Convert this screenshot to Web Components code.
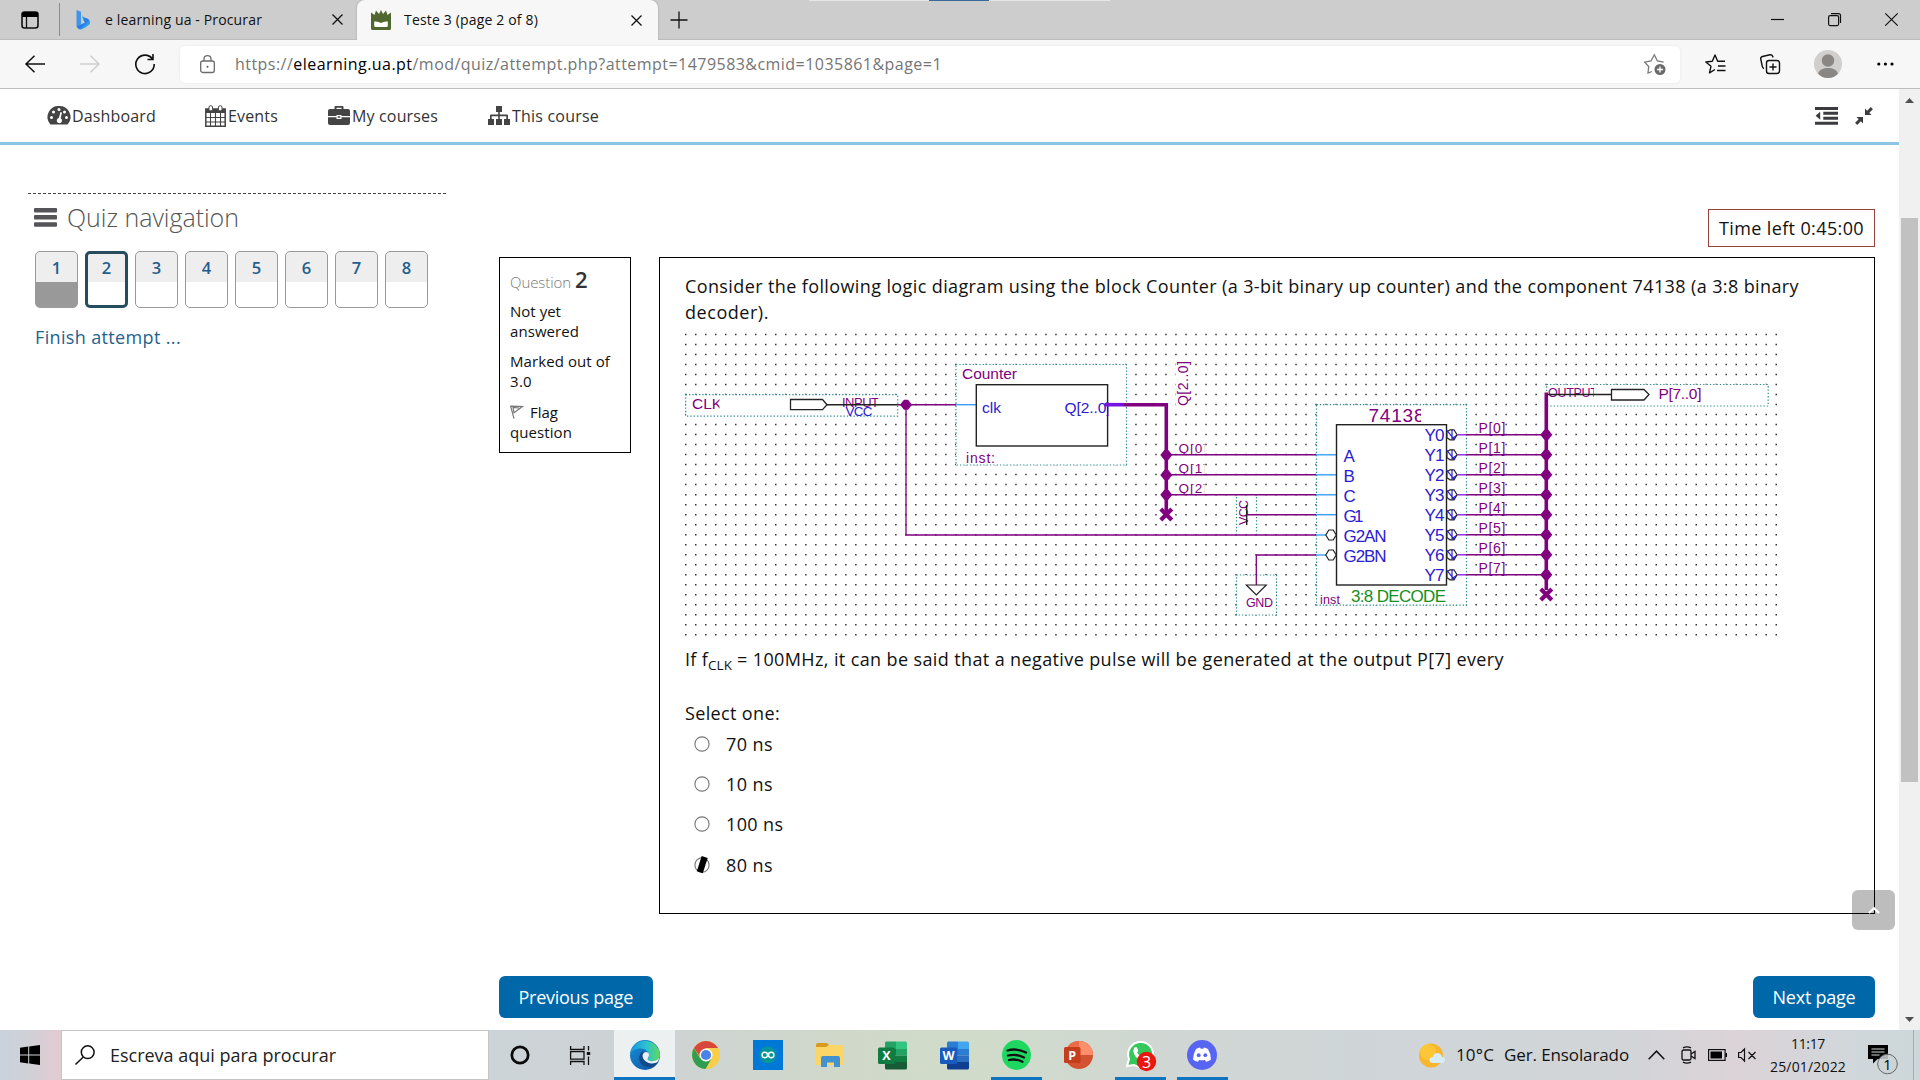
<!DOCTYPE html>
<html lang="en"><head><meta charset="utf-8"><title>Teste 3 (page 2 of 8)</title>
<style>
html,body{margin:0;width:1920px;height:1080px;overflow:hidden;background:#fff}
body{display:flex;flex-direction:column;font-family:"Open Sans","Noto Sans",sans-serif;color:#111}
body>*{box-sizing:border-box}
</style></head><body>
<edge-tabs></edge-tabs>
<edge-toolbar></edge-toolbar>
<page-view></page-view>
<task-bar></task-bar>
<script>
const define=(name,html,init)=>customElements.define(name,class extends HTMLElement{
  connectedCallback(){
    if(this.shadowRoot)return;
    const t=document.createElement('template');
    t.innerHTML='<style>*{box-sizing:border-box}svg{display:block;overflow:visible;flex:none}</style>'+(typeof html==='function'?html(this):html);
    this.attachShadow({mode:'open'}).append(t.content.cloneNode(true));
    if(init)init(this);
  }
});

/* One line of text tracked to a given measure */
define('fit-text','<style>:host{display:block;white-space:nowrap;flex:none}span{display:inline-block}</style><span><slot></slot></span>',el=>{
  const w=+el.getAttribute('w'),s=el.shadowRoot.querySelector('span');
  if(!w)return;
  el.style.width=w+'px';
  const n=el.textContent.length;
  s.style.letterSpacing=((w-s.getBoundingClientRect().width)/n)+'px';
});

define('x-mark',`<style>:host{display:block}</style><svg width="11" height="11" viewBox="0 0 11 11" stroke="#111" stroke-width="1.3"><path d="M.5.5 10.5 10.5M10.5.5.5 10.5"/></svg>`);

define('edge-tabs',`<style>
:host{display:flex;height:40px;background:#cdcdcd;position:relative;align-items:center;font-size:14px;line-height:20px;flex:none;border-bottom:1px solid #bcbcbc}
.left{width:357px;display:flex;align-items:center;padding-left:21px;height:40px}
.sep{width:1px;height:33px;background:#8b8b8b;margin:0 16px 0 20px}
.active{width:301px;height:40px;background:#f7f7f7;border-radius:8px 8px 0 0;display:flex;align-items:center;padding-left:14px;box-shadow:0 0 2px #999;clip-path:inset(-3px -3px 0 -3px);margin-bottom:-1px}
.win{margin-left:auto;display:flex;gap:44px;padding-right:22px;align-items:center}
.pill{position:absolute;left:809px;top:0;width:301px;height:1px;background:linear-gradient(90deg,#e6e6e6 120px,#38689c 120px 180px,#e6e6e6 180px)}
</style>
<div class="left">
<svg width="18" height="18" viewBox="0 0 18 18"><rect x="1" y="1" width="16" height="16" rx="2.5" fill="none" stroke="#111" stroke-width="1.6"/><path d="M1 3q0-2 2-2h12q2 0 2 2v3H1z"/><path d="M5.5 6v11" stroke="#111" stroke-width="1.3"/></svg>
<div class="sep"></div>
<svg width="15" height="20" viewBox="0 0 15 20"><defs><linearGradient id="b" x1="0" y1="0" x2="1" y2="1"><stop offset="0" stop-color="#39b7f3"/><stop offset=".5" stop-color="#2578e8"/><stop offset="1" stop-color="#43d0e8"/></linearGradient></defs><path d="M.5 0 5 1.8V14L1.5 17.5.5 16.5z" fill="#4095e8"/><path d="M6 6.2 12.3 9Q14.5 10.5 14 13.5 13.5 15.5 5 19.5 1.5 19.5 1 16.3L9 12.5 7.6 10.5z" fill="url(#b)"/></svg>
<fit-text w="157" style="margin-left:14px">e learning ua - Procurar</fit-text>
<x-mark style="margin-left:70px"></x-mark>
</div>
<div class="active">
<svg width="20" height="20" viewBox="0 0 20 20"><path d="M0 2.500 3.500 5 5 .5 8 4 10 0 12 4 15 .5 16.500 5 20 2.500V18.500q0 1.500-1.500 1.500h-17Q0 20 0 18.500z" fill="#50682f"/><path d="M3.200 11.500q3.800-.5 6.800 1.500 3-2 6.800-1.500V16q-.3 1-1.500 1H4.700q-1.200 0-1.500-1z" fill="#fff"/></svg>
<fit-text w="134" style="margin-left:13px">Teste 3 (page 2 of 8)</fit-text>
<x-mark style="margin-left:93px"></x-mark></div>
<svg style="margin-left:12px" width="18" height="18" viewBox="0 0 18 18"><path d="M9 .5v17M.5 9h17" stroke="#111" stroke-width="1.3"/></svg>
<div class="win"><svg width="13" height="13"><path d="M0 6.500h13" stroke="#111" stroke-width="1.200"/></svg>
<svg width="13" height="13" fill="none" stroke="#111" stroke-width="1.200"><rect x=".6" y="2.600" width="10" height="10" rx="1.500"/><path d="M3 .6h7.500Q12.500.6 12.500 2.600V10"/></svg>
<svg width="13" height="13"><path d="M.3.3 12.700 12.700M12.700.3.3 12.700" stroke="#111" stroke-width="1.200"/></svg></div>
<div class="pill"></div>`);

define('edge-toolbar',`<style>
:host{display:flex;height:49px;background:#f7f7f7;border-bottom:1px solid #bdbdbd;align-items:center;flex:none;padding-left:25px}
.url{margin-left:25px;width:1500px;height:37px;background:#fff;border-radius:5px;display:flex;align-items:center;padding:0 14px 0 20px;box-shadow:0 0 3px #e6e6e6}
fit-text{margin-left:20px;color:#757575;font-size:16px;line-height:24px;margin-right:auto}b{font-weight:400;color:#000}
</style>
<svg width="20" height="18" viewBox="0 0 20 18" fill="none" stroke="#111" stroke-width="1.500"><path d="M20 9H1M9.500.700 1 9l8.500 8.300"/></svg>
<svg style="margin-left:35px" width="20" height="18" viewBox="0 0 20 18" fill="none" stroke="#cfcfcf" stroke-width="1.500"><path d="M0 9h19M10.500.7 19 9l-8.500 8.300"/></svg>
<svg style="margin-left:35px" width="20" height="20" viewBox="0 0 20 20" fill="none" stroke="#111" stroke-width="1.600"><path d="M17.500 5A9.200 9.200 0 1 0 19.200 10M18 0v5.500h-5.500"/></svg>
<div class="url"><svg width="15" height="18" viewBox="0 0 15 18" fill="none" stroke="#6b6b6b" stroke-width="1.300"><rect x=".7" y="6" width="13.600" height="11.500" rx="2"/><path d="M4 6V4Q4 .7 7.500.7T11 4v2"/><circle cx="7.500" cy="11.800" r="1" fill="#555" stroke="none"/></svg>
<fit-text w="707">https://<b>elearning.ua.pt</b>/mod/quiz/attempt.php?attempt=1479583&amp;cmid=1035861&amp;page=1</fit-text>
<svg width="22" height="21" viewBox="0 0 22 21"><path d="M8 17.500 4 19l.7-6.500L.7 8.200 7 7l3.300-6.200L13.400 7l6.200 1.200" fill="none" stroke="#777" stroke-width="1.300"/><circle cx="16" cy="15.500" r="5.500" fill="#6a6a6a"/><path d="M16 12.500v6M13 15.500h6" stroke="#fff" stroke-width="1.300"/></svg></div>
<svg style="margin-left:25px" width="21" height="20" viewBox="0 0 21 20" fill="none" stroke="#111" stroke-width="1.400"><path d="M10 15.500 4.500 18.800 6 12.200.8 8l6.500-.7L10 1l2.700 6.200H20M13 12h7.500M12 16.500h8.500" stroke-linejoin="round"/></svg>
<svg style="margin-left:34px" width="20" height="20" viewBox="0 0 20 20" fill="none" stroke="#111" stroke-width="1.400"><rect x="6.500" y="6.500" width="13" height="13" rx="2.500"/><path d="M13 9.500v7M9.500 13h7M4 14.500Q2.500 14 2.200 12L.7 5Q.5 3 2.500 2.500L10 .7Q12 .5 12.800 2.500L13 3.500"/></svg>
<svg style="margin-left:34px" width="28" height="28" viewBox="0 0 28 28"><circle cx="14" cy="14" r="14" fill="#d1cfcd"/><circle cx="14" cy="10.500" r="6.200" fill="#8a8684"/><path d="M4 23.500Q6 18 14 18t10 5.500Q20 28 14 28T4 23.500" fill="#8a8684"/></svg>
<svg style="margin-left:35px" width="17" height="4"><circle cx="1.800" cy="2" r="1.600"/><circle cx="8.400" cy="2" r="1.600"/><circle cx="15" cy="2" r="1.600"/></svg>`);

define('page-view',`<style>
:host{display:flex;height:941px;flex:none;background:#fff}
.page{width:1899px;display:flex;flex-direction:column}
.cols{display:flex;height:885px}
.main{width:1376px;margin-left:52px;display:flex;flex-direction:column}
.timer{align-self:flex-end;margin-top:64px;width:167px;height:38px;border:1px solid #99413c;font-size:18px;line-height:36px;padding-left:10px}
.q{display:flex;gap:28px;margin-top:10px;height:657px}
.btns{display:flex;justify-content:space-between;margin-top:62px}
.btns div{height:42px;border-radius:6px;background:#0067a8;color:#fff;font-size:18px;line-height:42px;padding:0 19.500px}
</style>
<div class="page"><site-nav></site-nav><div class="cols"><quiz-nav></quiz-nav>
<div class="main"><div class="timer"><fit-text w="145">Time left 0:45:00</fit-text></div>
<div class="q"><question-info></question-info><question-body></question-body></div>
<div class="btns"><div><fit-text w="114.500">Previous page</fit-text></div><div><fit-text w="83">Next page</fit-text></div></div></div>
</div></div><page-scroll></page-scroll>`);

define('page-scroll',`<style>:host{display:flex;flex-direction:column;width:21px;background:#f0f0f0;align-items:center;padding-top:9px}i{width:17px;height:564px;background:#c1c1c1;margin:115px 0 235px}</style>
<svg width="9" height="5" fill="#505050"><path d="M0 5 4.500 0 9 5z"/></svg><i></i><svg width="9" height="5" fill="#505050"><path d="M0 0h9L4.500 5z"/></svg>`);

define('site-nav',`<style>
:host{display:flex;height:56px;flex:none;border-bottom:3px solid #8cc5e3;padding:0 26px 0 48px;font-size:16px;line-height:24px;color:#333;align-items:center}
div{display:flex;align-items:center;gap:2px}.r{margin-left:auto;gap:17px}
</style>
<div style="width:157px"><svg width="22" height="19" viewBox="0 0 22 19"><path d="M11 0A11 11 0 0 0 1.700 17.500Q2.200 18.500 3 18.500H19Q19.800 18.500 20.300 17.500A11 11 0 0 0 11 0z" fill="#444"/><g fill="#fff"><circle cx="3.500" cy="11.500" r="1.500"/><circle cx="5.500" cy="6" r="1.500"/><circle cx="11" cy="3.600" r="1.500"/><circle cx="16.500" cy="6" r="1.500"/><circle cx="18.500" cy="11.500" r="1.500"/><path d="M12.500 6 14 6.500 12.700 12.300A2.600 2.600 0 1 1 10.800 12z"/></g></svg><fit-text w="84">Dashboard</fit-text></div>
<div style="width:123px"><svg width="21" height="22" viewBox="0 0 21 22"><path d="M.8 4h19.400v17.200H.8z" fill="none" stroke="#444" stroke-width="1.500"/><path d="M1 4h19v4H1z" fill="#444"/><path d="M1 12.500h19M1 17h19M5.500 8v13M10.500 8v13M15.500 8v13" stroke="#444" stroke-width="1.100"/><rect x="4" y=".8" width="3.500" height="5" rx="1.300" fill="#fff" stroke="#444"/><rect x="13.500" y=".8" width="3.500" height="5" rx="1.300" fill="#fff" stroke="#444"/></svg><fit-text w="50">Events</fit-text></div>
<div style="width:160px"><svg width="22" height="19" viewBox="0 0 22 19" fill="#444"><path d="M6.500 3V1Q6.500 0 7.500 0h7Q15.500 0 15.500 1v2H20q2 0 2 2v5H13.500V9h-5v1H0V5Q0 3 2 3zM8.500 3h5V1.800h-5zM0 11.200h8.500V13h5v-1.800H22V17q0 2-2 2H2q-2 0-2-2zM9.700 10.200h2.600v1.600H9.700z" fill-rule="evenodd"/></svg><fit-text w="86">My courses</fit-text></div>
<div><svg width="22" height="19" viewBox="0 0 22 19" fill="#444"><path d="M8 0h6v6h-2.200v2.500H19q1 0 1 1V13h2v6h-6v-6h2.300v-2.700h-6.500V13H14v6H8v-6h2.200v-2.700H3.700V13H6v6H0v-6h2V9.500q0-1 1-1h7.200V6H8z"/></svg><fit-text w="87">This course</fit-text></div>
<div class="r"><svg width="23" height="18" viewBox="0 0 23 18" fill="#3c3c40"><path d="M0 0h23v3H0zM8.300 4.700H23v3H8.300zM8.300 9.700H23v3H8.300zM0 14.700h23v3H0zM5.200 4.700v8L.6 8.700z"/></svg>
<svg width="18" height="18" viewBox="0 0 18 18" fill="#3c3c40"><path d="M10 8V1.500L12.200 3.700 15.800.1 17.900 2.200 14.300 5.800 16.500 8zM8 10v6.500L5.800 14.300 2.200 17.900.1 15.800 3.700 12.200 1.500 10z"/></svg></div>`);

define('quiz-nav',el=>`<style>
:host{display:block;width:447px;padding:48px 0 0 28px}
.dash{height:0;border-top:1px dashed #444;width:418px}
h3{margin:8px 0 0 6px;display:flex;gap:10px;align-items:center;font-size:25px;font-weight:300;line-height:30px;color:#555}
.n{display:flex;gap:7px;margin:19px 0 0 7px}
.n div{width:43px;height:57px;border:1px solid #999;border-radius:5px;background:linear-gradient(#eee 30px,#fff 30px);color:#235d8c;font-weight:600;font-size:16.500px;line-height:31px;text-align:center}
.n .d{background:linear-gradient(#eee 30px,#999 30px)}.n .c{border:3px solid #264d5e;background:linear-gradient(#eee 28px,#fff 28px);line-height:27px}
a{display:block;margin:16px 0 0 7px;color:#1f628f;font-size:18px;line-height:26px}
</style><div class="dash"></div><h3><svg width="23" height="19" fill="#555559"><rect width="23" height="4.500" rx="1"/><rect y="7" width="23" height="4.500" rx="1"/><rect y="14.300" width="23" height="4.500" rx="1"/></svg><fit-text w="172">Quiz navigation</fit-text></h3>
<div class="n">${[1,2,3,4,5,6,7,8].map(n=>`<div class="${n==1?'d':n==2?'c':''}">${n}</div>`).join('')}</div><a><fit-text w="146">Finish attempt ...</fit-text></a>`);

define('question-info',`<style>
:host{display:block;width:132px;height:196px;border:1px solid #000;padding:8px 10px;font-size:15px;line-height:20px;flex:none}
.h{display:flex;align-items:baseline;gap:4px;color:#777;font-weight:300;line-height:26px;height:34.500px}b{font-size:22px;font-weight:600;color:#333}
p{margin:0 0 10px}.f{display:flex;gap:7px;align-items:center;margin-top:11px}
</style><div class="h"><fit-text w="61">Question</fit-text><b>2</b></div>
<p><fit-text w="51">Not yet</fit-text><fit-text w="69">answered</fit-text></p>
<p><fit-text w="100">Marked out of</fit-text><fit-text w="22">3.0</fit-text></p>
<p><span class="f"><svg width="13" height="14" fill="none" stroke="#777" stroke-width="1.200"><path d="M.5.7 4 13.700M1 1.200 12.500 1.600 4 7.800 3 2.500 9 3" /></svg><fit-text w="28">Flag</fit-text></span><fit-text w="62">question</fit-text></p>`);

define('question-body',el=>`<style>
:host{display:block;width:1216px;height:657px;border:1px solid #000;padding:15px 25px;font-size:18px;line-height:26px;position:relative;flex:none}
.if{display:flex;margin-top:2.500px;height:30px}.if small{font-size:13.500px;position:relative;top:6px}
.s{margin-top:24px}
.o{display:flex;align-items:center;gap:16px;height:26px;padding-left:9px;margin-top:14.200px}.o:first-of-type{margin-top:0}
.up{position:absolute;left:1192px;top:632px;width:43px;height:40px;border-radius:6px;background:rgba(0,0,0,.26);display:flex;align-items:center;justify-content:center}
</style><fit-text w="1114">Consider the following logic diagram using the block Counter (a 3-bit binary up counter) and the component 74138 (a 3:8 binary</fit-text><fit-text w="84">decoder).</fit-text>
<logic-diagram></logic-diagram>
<div class="if"><fit-text w="23">If f</fit-text><small><fit-text w="24">CLK</fit-text></small><fit-text w="767" style="margin-left:5px">= 100MHz, it can be said that a negative pulse will be generated at the output P[7] every</fit-text></div>
<fit-text class="s" w="95">Select one:</fit-text>
<section style="margin-top:5.500px">${[['70 ns',47],['10 ns',47],['100 ns',57.500],['80 ns',47]].map(([t,w],i)=>`<div class="o"><svg width="16" height="16" viewBox="0 0 16 16"><circle cx="8" cy="8" r="7.100" fill="#fff" stroke="#767676" stroke-width="1.100"/>${i==3?'<path d="M7.700-1 13.700 1 8.800 16.300 2.800 14.300z"/>':''}</svg><fit-text w="${w}">${t}</fit-text></div>`).join('')}</section>
<div class="up"><svg width="12" height="7"><path d="M1 6 6 1.300 11 6" fill="none" stroke="#fff" stroke-width="2.200"/></svg></div>`);

define('logic-diagram',()=>{
  const P='#800080',B='#2a20d0',L='#3d9df5';
  const ln=(x1,y1,x2,y2,c=P,w=1.4)=>`<path d="M${x1} ${y1}L${x2} ${y2}" stroke="${c}" stroke-width="${w}"/>`;
  const dot=(x,y)=>`<path d="M${x-6} ${y}l4-5h4l4 5-4 5h-4z" fill="${P}"/>`;
  const ex=(x,y)=>`<path d="M${x-5.5} ${y-5.5}l11 11m0-11l-11 11" stroke="${P}" stroke-width="4.200"/>`;
  const bx=(x,y,w,h)=>`<rect x="${x}" y="${y}" width="${w}" height="${h}" fill="#fff" stroke="#2b8a8a" stroke-width="1.200" stroke-dasharray="1.300 2.030"/>`;
  let id=0;
  const tx=(s,x,y,z,c,len,clip)=>{const k='c'+id++;return (clip?`<clipPath id="${k}"><rect x="${clip[0]}" y="${clip[1]}" width="${clip[2]}" height="${clip[3]}"/></clipPath>`:'')+`<text x="${x}" y="${y}" font-size="${z}" fill="${c}"${len?` textLength="${len}"`:''}${clip?` clip-path="url(#${k})"`:''}>${s}</text>`};
  let o='';
  o+=bx(685.7,394.700,212,21.500)+bx(956,364.500,170.500,100.500)+bx(1316.500,404.700,150,200.500)+bx(1236.500,575,40,40)+bx(1546.700,384.500,221.500,21.500);
  o+='<path d="M1234 496h24v38h-24z" fill="#fff"/><path d="M1236.500 497v37M1256.500 497v37" stroke="#2b8a8a" stroke-width="1.200" stroke-dasharray="1.300 2.030"/>';
  o+=tx('CLK',692,409,15.500,P,0,[690,395,29.500,20])+tx('INPUT',842,406.500,13,P,37,[840,396,38.500,11])+tx('VCC',845.500,416,13.500,B,27);
  o+='<path d="M790.500 399.500H822.500L827 404.700 822.500 409.700H790.500z" fill="#fff" stroke="#222" stroke-width="1.300"/>'+ln(827,404.700,897,404.700,'#222');
  o+=ln(897,404.700,956,404.700)+ln(956,404.700,976,404.700,L)+dot(906,404.700)+`<path d="M906 405V535H1316" fill="none" stroke="${P}" stroke-width="1.300"/>`;
  o+='<rect x="976.300" y="384.700" width="131.300" height="61.300" fill="#fff" stroke="#222" stroke-width="1.400"/>';
  o+=tx('Counter',962,379,15.500,P,55)+tx('clk',982,413,15.500,B,19)+tx('Q[2..0]',1064.500,413,15.500,B,46,[1060,395,48.500,24])+tx('inst:',966,463,14,P,29);
  o+=ln(1104.500,404.700,1124,404.700,'#7512e0',3.600)+`<path d="M1124 404.700H1166.300V514" fill="none" stroke="${P}" stroke-width="3.600"/>`+[455,475,494.700].map(y=>dot(1166.300,y)).join('')+ex(1166.300,514.500);
  o+=`<path d="M1175.500 361h14v46h-14z" fill="#fff"/><text transform="translate(1187.500 406) rotate(-90)" font-size="14" fill="${P}" textLength="45">Q[2..0]</text>`;
  [0,1,2].forEach(i=>{const y=455+20*i;o+=`<path d="M1178 ${y-12}h26v10h-26z" fill="#fff"/>`+tx(`Q[${i}]`,1178.500,y-2.500,13.500,P,28.5,[1176,y-14,28.500,13.200])+ln(1170,y-.2,1316,y-.2)+ln(1316,y-.2,1336,y-.2,L)});
  o+=`<text transform="translate(1247.500 525) rotate(-90)" font-size="12.500" fill="${P}" textLength="25">VCC</text>`+ln(1246.700,505,1246.700,525,'#222')+ln(1247,514.700,1316,514.700)+ln(1316,514.700,1336,514.700,L);
  o+=`<path d="M1256.300 585V555H1316" fill="none" stroke="${P}" stroke-width="1.300"/>`+ln(1316,535,1326,535,L)+ln(1316,555,1326,555,L);
  o+='<path d="M1246.300 585h20l-10 10z" fill="#fff" stroke="#222" stroke-width="1.200"/>'+tx('GND',1246,606.500,12.500,P,27);
  o+='<rect x="1336.500" y="424.700" width="110" height="160.300" fill="#fff" stroke="#222" stroke-width="1.400"/>';
  o+=[535,555].map(y=>`<path d="M1325.800 ${y}l3-5h4.400l3 5-3 5h-4.400z" fill="#fff" stroke="#222" stroke-width="1.200"/>`).join('');
  o+=tx('74138',1368.500,421.500,19,P,56,[1365,403,56,20]);
  ['A','B','C','G1','G2AN','G2BN'].forEach((s,i)=>o+=tx(s,1343.500,461.500+20*i,17,B,[0,0,0,20,43,43][i]));
  for(let i=0;i<8;i++){const y=434.800+20*i;
    o+=tx('Y'+i,1424.500,y+6.200,17,B,20)+`<path d="M1447 ${y-3}l3-2h4l3 5-3 5h-4l-3-2z" fill="#fff" stroke="#222" stroke-width="1.200"/><path d="M1446.500 ${y-5}l8 10M1452 ${y-5}v9l4-3" fill="none" stroke="${B}" stroke-width="1.200"/>`;
    o+=ln(1457,y,1466,y,'#8a22e8')+ln(1466,y,1546,y)+`<path d="M1479 ${y-12}h25v10h-25z" fill="#fff"/>`+tx(`P[${i}]`,1478.500,y-1.800,14,P,27)+dot(1546.300,y)}
  o+=tx('inst',1320,603.500,12.500,P,20)+tx('3:8 DECODE',1351,601.700,17,'#15901a',95);
  o+=ln(1546.300,392.500,1546.300,590,P,3.600)+ex(1546.300,594.500);
  o+=tx('OUTPUT',1548,397,12.500,P,50,[1546,387,48,10])+ln(1547,394.500,1611,394.500,'#222')+'<path d="M1611.500 389.500H1644L1649 394.500 1644 400H1611.500z" fill="#fff" stroke="#222" stroke-width="1.300"/>'+tx('P[7..0]',1658.500,399,15.500,P,43);
  let dots='';for(let r=0;r<31;r++)for(let c=0;c<110;c++)dots+=`M${(685+c*10.005).toFixed(1)} ${(334.500+r*10.010).toFixed(1)}h1.500`;
  return `<style>:host{display:block;height:318px}text{font-family:"Liberation Sans",Arial,sans-serif}</style><svg width="1102" height="318" viewBox="685 325 1102 318"><path d="${dots}" stroke="#333" stroke-width="1.500"/>${o}</svg>`;
});

const office=(a,b,c,d,e,l,w)=>`<svg width="${w}" height="29" viewBox="0 0 29 29"><path d="M7 2q0-1.500 1.500-1.500H18V8H7z" fill="${a}"/><path d="M18 .5h9.500Q29 .5 29 2v6H18z" fill="${b}"/><path d="M7 8h11v6.500H7z" fill="${c}"/><path d="M18 8h11v6.500H18z" fill="${a}"/><path d="M7 14.500h22V21H7z" fill="${c}"/><path d="M7 21h22v6q0 1.500-1.500 1.500h-19Q7 28.500 7 27z" fill="${d}"/><rect y="6.500" width="17" height="16.500" rx="1.500" fill="${e}"/><text x="8.500" y="19" text-anchor="middle" fill="#fff" font-family="Open Sans" font-weight="700" font-size="12.500">${l}</text></svg>`;

define('task-bar',`<style>
:host{display:flex;height:50px;flex:none;background:linear-gradient(90deg,#c9d2de 0,#cfd1d7 25px,#e2cbd2 60px,#cdd4d7 489px,#cdd2d5 620px,#d0d8ca 840px,#d0dcc9 960px,#d0d7d3 1150px,#cfd5d8 1400px,#d1d5d8 1600px,#dbd3d8 1740px,#d0d7da 1860px,#cdd7da 1920px);align-items:center}
.start{width:61px;padding-left:20px}.search{width:428px;height:50px;background:#fff;border:1px solid #c5c5c5;display:flex;align-items:center;padding-left:13px;gap:15px;font-size:18px;color:#222}
.i{height:50px;display:flex;align-items:center;justify-content:center;flex:none;position:relative}
.on{border-bottom:3px solid #0f74c0;padding-top:3px}
.tray{display:flex;align-items:center;margin-left:auto;width:501px;font-size:16px;line-height:24px;height:50px}
.clock{font-size:14px;line-height:23px;display:flex;flex-direction:column;align-items:center;width:76px;margin-left:14px}
</style>
<div class="start"><svg width="20" height="20" viewBox="0 0 20 20"><path d="M0 2.800 8.200 1.600v7.900H0zM9.200 1.500 20 0v9.500H9.200zM0 10.500h8.200v7.900L0 17.300zM9.200 10.500H20V20L9.200 18.500z"/></svg></div>
<div class="search"><svg width="20" height="20" fill="none" stroke="#111" stroke-width="1.500"><circle cx="12.700" cy="7.200" r="6.400"/><path d="M8.300 12 .5 19.500"/></svg><fit-text w="226">Escreva aqui para procurar</fit-text></div>
<div class="i" style="width:62px"><svg width="20" height="20"><circle cx="10" cy="10" r="8.200" fill="none" stroke="#0a0a0a" stroke-width="2.700"/></svg></div>
<div class="i" style="width:63px;padding-right:5px"><svg width="21" height="19" fill="none" stroke="#111" stroke-width="1.300"><path d="M.6 0v3.500h13.400V0M.6 19v-3.500h13.400V19M.6 5.700h13.400v7.500H.6zM18.500 0v4.500M18.500 10.500V19"/><path d="M16.800 6h3.400v3h-3.400z" fill="#111" stroke="none"/></svg></div>
<div class="i on" style="width:61px;background:#edf0f1"><svg width="30" height="30" viewBox="0 0 30 30"><defs><linearGradient id="g" x1="0" x2="1"><stop stop-color="#1795df"/><stop offset=".55" stop-color="#2bc3d2"/><stop offset="1" stop-color="#62d957"/></linearGradient><linearGradient id="h" x1="0" y1="0" x2="1" y2="1"><stop stop-color="#1690d9"/><stop offset="1" stop-color="#124f9d"/></linearGradient></defs><circle cx="15" cy="15" r="15" fill="url(#h)"/><path d="M.2 13.500A15 15 0 0 1 30 15Q29.500 21 22.500 21.500 18 21.500 17.500 19.500 19.500 17.500 19 14.500 17 8 9.500 8.500 3 9 .2 13.500z" fill="url(#g)"/><path d="M12 11.500Q7 17 10.500 23 15 29 24 26.500 27 24.500 28.500 22 22 25 17 22.500 12 19.500 14 14.500L15.500 12.500z" fill="#114a8b"/><path d="M12.500 15Q14 10.500 18 12.500 20.200 15 17.700 18.500 17 20.500 21 21.200 26 21.500 29 18 28.500 22 26 22.700 20 24.500 16 21.500 12.500 19 12.500 15" fill="#edf0f1"/></svg></div>
<div class="i" style="width:62px"><svg width="28" height="28" viewBox="0 0 28 28"><circle cx="14" cy="14" r="14" fill="#f8cd48"/><path d="M1.900 7A14 14 0 0 1 26.100 7H14L9 17z" fill="#d8473b"/><path d="M1.900 7A14 14 0 0 0 13.500 28L19.500 17.500 14 20 8 17z" fill="#2f9e50"/><circle cx="14" cy="14" r="6.500" fill="#fff"/><circle cx="14" cy="14" r="5.100" fill="#4a82ea"/></svg></div>
<div class="i" style="width:62px"><svg width="30" height="30"><rect width="30" height="30" fill="#0078d7"/><circle cx="15" cy="15" r="8.500" fill="#00949b"/><g fill="none" stroke="#fff" stroke-width="1.400"><circle cx="11.800" cy="15" r="2.700"/><circle cx="18.200" cy="15" r="2.700"/></g></svg></div>
<div class="i" style="width:62px"><svg width="28" height="24" viewBox="0 0 28 24"><path d="M0 2Q0 0 2 0h9l2 2-2 3H0z" fill="#d79a1d"/><path d="M0 4h10l3-2h13q1.500 0 1.500 1.500V22H0z" fill="#fbd566"/><path d="M5 24V15q0-2 2-2h15q2 0 2 2v9h-6v-4.500h-7V24z" fill="#4292d0"/></svg></div>
<div class="i" style="width:62px">${office('#21a366','#33c481','#107c41','#185c37','#107c41','X',29)}</div>
<div class="i" style="width:62px">${office('#2b7cd3','#41a5ee','#2b6fc3','#103f91','#185abd','W',29)}</div>
<div class="i" style="width:62px;padding-right:0"><div class="i on" style="width:51px"><svg width="29" height="30" viewBox="0 0 29 30"><ellipse cx="14.500" cy="15" rx="14.500" ry="15" fill="#1ed760"/><path d="M5.500 10.500q9-2.700 18.500 2M6 15.500q8.500-2 16 2M7 20q7-1.500 13.500 1.700" fill="none" stroke="#111" stroke-width="2.300" stroke-linecap="round"/></svg></div></div>
<div class="i" style="width:62px"><svg width="29" height="28" viewBox="0 0 29 28"><circle cx="15" cy="14" r="14" fill="#d35230"/><path d="M15 0a14 14 0 0 1 14 14H15z" fill="#ff8f6b"/><path d="M15 0A14 14 0 0 0 1.500 14H15z" fill="#ed6c47"/><rect y="6" width="16.500" height="16" rx="1.500" fill="#c43e1c"/><text x="8.300" y="18.500" text-anchor="middle" fill="#fff" font-family="Open Sans" font-weight="700" font-size="12.500">P</text></svg></div>
<div class="i" style="width:62px"><div class="i on" style="width:51px"><svg width="29" height="30" viewBox="0 0 29 30"><path d="M1 26 3 19A12.500 12.500 0 1 1 8 25z" fill="#35c759" stroke="#fff" stroke-width="2"/><path d="M8 8q2-2 3.500.5t-.5 4q2 3.500 5 4.500 2-3 5 0-1 4-5 3.500Q8 18 7.300 11z" fill="#fff"/><circle cx="20.500" cy="21.500" r="9.700" fill="#e9170f"/><text x="20.500" y="27.500" text-anchor="middle" fill="#fff" font-family="Open Sans" font-size="16">3</text></svg></div></div>
<div class="i" style="width:62px"><div class="i on" style="width:51px"><svg width="30" height="30" viewBox="0 0 30 30"><circle cx="15" cy="15" r="15" fill="#5865f2"/><path d="M9 9q2.500-1.500 4-1.500l.7 1.200h2.600L17 7.500q1.500 0 4 1.500 3 5 3 10.500-2 2-5 2.300l-1-1.800q-3 .7-6 0l-1 1.800q-3-.3-5-2.300Q6 14 9 9z" fill="#fff"/><circle cx="11.700" cy="15.200" r="1.900" fill="#5865f2"/><circle cx="18.300" cy="15.200" r="1.900" fill="#5865f2"/></svg></div></div>
<div class="tray">
<svg width="26" height="25" viewBox="0 0 26 25"><circle cx="12" cy="12.500" r="12" fill="#f9b52c"/><circle cx="9" cy="9" r="8" fill="#ffd23f" opacity=".6"/><path d="M14 20q-3.500 0-3.500-3t3.500-3q1-4 4.500-4t4.500 4q3 .3 3 3t-3 3z" fill="#d7ecfb"/></svg>
<fit-text w="38" style="margin-left:11px;font-size:17px">10°C</fit-text><fit-text w="125" style="margin-left:10px;font-size:17px">Ger. Ensolarado</fit-text>
<svg style="margin-left:19px" width="17" height="10" fill="none" stroke="#111" stroke-width="1.500"><path d="M.7 9.300 8.500 1.200 16.300 9.300"/></svg>
<svg style="margin-left:16px" width="15" height="18" fill="none" stroke="#111" stroke-width="1.300"><rect x="1" y="4" width="9" height="10" rx="1.500"/><path d="M10 8 14 5.500v7L10 10M2 1.800Q6 0 10 1.800M2 16.200q4 1.800 8 0"/></svg>
<svg style="margin-left:12px" width="19" height="12"><rect x=".6" y=".6" width="16.500" height="10.800" fill="none" stroke="#111" stroke-width="1.200"/><path d="M2.500 2.500H14v7H2.500zM17.500 4H19v4h-1.500z"/></svg>
<svg style="margin-left:11px" width="18" height="14" fill="none" stroke="#111" stroke-width="1.200"><path d="M.6 4.500H3L6.500 1v12L3 9.500H.6zM10.500 4 17.500 11M17.500 4l-7 7"/></svg>
<div class="clock"><fit-text w="34">11:17</fit-text><fit-text w="76">25/01/2022</fit-text></div>
<svg style="margin-left:22px" width="32" height="30" viewBox="0 0 32 30"><path d="M0 5h20v14H9.500L5 23.500V19H0z" fill="#000"/><path d="M3.500 9h13M3.500 12h13M3.500 15h8" stroke="#d5d9da" stroke-width="1.100"/><circle cx="19.500" cy="24" r="9.800" fill="#cbd3d5" fill-opacity=".85" stroke="#666"/><text x="19.500" y="29.500" text-anchor="middle" font-family="Open Sans" font-size="14.500">1</text></svg>
<i style="width:1px;height:50px;background:#a5adb0;margin-left:13px"></i>
</div>`);
</script></body></html>
